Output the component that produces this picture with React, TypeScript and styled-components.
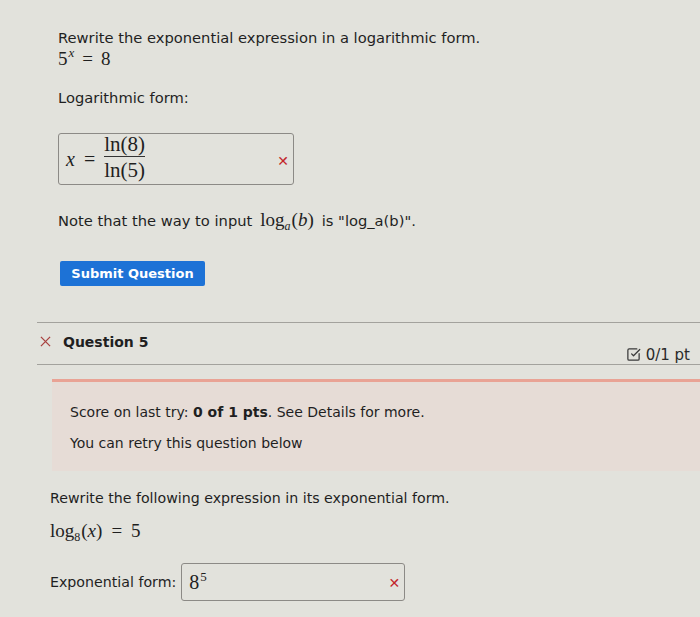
import * as React from 'react';
import styled, { createGlobalStyle } from 'styled-components';
import { SquareCheckBig } from 'lucide-react';

const GlobalStyle = createGlobalStyle`
  html, body {
    margin: 0;
    padding: 0;
    background: #e2e2dc;
  }
  body {
    font-family: 'DejaVu Sans', Verdana, sans-serif;
    color: #1f1f1f;
  }
`;

const Page = styled.div`
  width: 700px;
  height: 617px;
  overflow: hidden;
  padding-top: 28px;
  box-sizing: border-box;
`;

const Section = styled.div<{ left: number }>`
  padding-left: ${(p) => p.left}px;
  display: flex;
  flex-direction: column;
  align-items: flex-start;
`;

const Prompt = styled.div<{ size: number }>`
  font-size: ${(p) => p.size}px;
  line-height: 20px;
`;

const MathLine = styled.div<{ top: number }>`
  margin-top: ${(p) => p.top}px;
  font-family: 'Liberation Serif', 'DejaVu Serif', serif;
  font-size: 19px;
  line-height: 22px;
  color: #1f1f1f;
`;

const Sup = styled.sup<{ italic?: boolean }>`
  font-size: 13px;
  font-style: ${(p) => (p.italic ? 'italic' : 'normal')};
  vertical-align: 8px;
  line-height: 0;
  margin-left: 1px;
`;

const Sub = styled.sub`
  font-size: 12px;
  vertical-align: -4px;
  line-height: 0;
  margin-right: 1px;
`;

const Op = styled.span<{ gap?: number }>`
  margin: 0 ${(p) => p.gap ?? 8}px;
`;

const I = styled.i`
  font-style: italic;
`;

const Label = styled.div<{ top: number }>`
  margin-top: ${(p) => p.top}px;
  font-size: 14.7px;
  line-height: 20px;
`;

const AnswerBox = styled.div<{ w: number; h: number; top: number }>`
  margin-top: ${(p) => p.top}px;
  width: ${(p) => p.w}px;
  height: ${(p) => p.h}px;
  box-sizing: border-box;
  border: 1.5px solid #8c8a86;
  border-radius: 3px;
  display: flex;
  align-items: center;
  justify-content: space-between;
  padding: 0 4px 0 7px;
  font-family: 'Liberation Serif', 'DejaVu Serif', serif;
  color: #1f1f1f;
`;

const WrongMark = styled.span<{ drop: number }>`
  font-family: 'DejaVu Sans', sans-serif;
  font-weight: bold;
  font-size: 14px;
  color: #c3262b;
  margin-top: ${(p) => p.drop}px;
`;

const Fraction = styled.span`
  display: inline-flex;
  flex-direction: column;
  align-items: center;
  font-size: 21px;
  line-height: 22px;
  margin-top: -4px;
`;

const FracBar = styled.span`
  align-self: stretch;
  height: 1px;
  background: #333;
  margin: 1px 0 2px;
`;

const Expr = styled.span`
  display: flex;
  align-items: center;
  font-size: 20px;
`;

const Note = styled.div`
  margin-top: 24px;
  font-size: 14.7px;
  line-height: 22px;
  display: flex;
  align-items: baseline;
  gap: 8px;
`;

const InlineMath = styled.span`
  font-family: 'Liberation Serif', 'DejaVu Serif', serif;
  font-size: 19px;
`;

const SubmitButton = styled.button`
  margin-top: 29px;
  margin-left: 2px;
  background: #1d72d6;
  color: #fff;
  border: none;
  border-radius: 2px;
  height: 25px;
  width: 145px;
  font-family: 'DejaVu Sans', sans-serif;
  font-weight: bold;
  font-size: 13px;
  padding: 0;
`;

const Divider = styled.div<{ top: number; left: number }>`
  margin-top: ${(p) => p.top}px;
  margin-left: ${(p) => p.left}px;
  height: 1px;
  background: #a3a29d;
`;

const QuestionRow = styled.div`
  height: 41px;
  display: flex;
  align-items: center;
  justify-content: space-between;
  padding: 0 10px 0 40px;
`;

const QuestionTitle = styled.div`
  display: flex;
  align-items: center;
  gap: 12px;
  font-size: 14px;
  font-weight: bold;
  margin-top: -4px;
`;

const XIcon = styled.svg`
  width: 11px;
  height: 11px;
`;

const Points = styled.div`
  display: flex;
  align-items: center;
  gap: 5px;
  font-size: 15px;
  margin-top: 22px;
  color: #2a2a2a;
`;

const ScoreBox = styled.div`
  margin: 14px 0 0 52px;
  border-top: 3px solid #e9a395;
  background: #e6dcd6;
  padding: 20px 18px 16px 18px;
  height: 92px;
  box-sizing: border-box;
  display: flex;
  flex-direction: column;
  gap: 11px;
  font-size: 14px;
  line-height: 20px;
`;

const Section2 = styled(Section)`
  margin-top: 17px;
`;

const FormRow = styled.div`
  margin-top: 21px;
  display: flex;
  align-items: center;
  gap: 5px;
  font-size: 14.2px;
`;

export default function App() {
  return (
    <Page>
      <GlobalStyle />
      <Section left={58}>
        <Prompt size={14.7}>Rewrite the exponential expression in a logarithmic form.</Prompt>
        <MathLine top={0}>
          5<Sup italic>x</Sup>
          <Op>=</Op>8
        </MathLine>
        <Label top={18}>Logarithmic form:</Label>
        <AnswerBox w={236} h={52} top={25}>
          <Expr>
            <I>x</I>
            <Op gap={9}>=</Op>
            <Fraction>
              <span>ln(8)</span>
              <FracBar />
              <span>ln(5)</span>
            </Fraction>
          </Expr>
          <WrongMark drop={4}>✕</WrongMark>
        </AnswerBox>
        <Note>
          <span>Note that the way to input</span>
          <InlineMath>
            log<Sub><I>a</I></Sub>(<I>b</I>)
          </InlineMath>
          <span>is "log_a(b)".</span>
        </Note>
        <SubmitButton>Submit Question</SubmitButton>
      </Section>

      <Divider top={36} left={37} />
      <QuestionRow>
        <QuestionTitle>
          <XIcon viewBox="0 0 12 12">
            <path d="M1 1L11 11M11 1L1 11" stroke="#a8413f" strokeWidth="1.4" />
          </XIcon>
          Question 5
        </QuestionTitle>
        <Points>
          <SquareCheckBig size={15} strokeWidth={2} color="#3a3a3a" />
          0/1 pt
        </Points>
      </QuestionRow>
      <Divider top={0} left={37} />

      <ScoreBox>
        <div>
          Score on last try: <b>0 of 1 pts</b>. See Details for more.
        </div>
        <div>You can retry this question below</div>
      </ScoreBox>

      <Section2 left={50}>
        <Prompt size={14.2}>Rewrite the following expression in its exponential form.</Prompt>
        <MathLine top={12}>
          log<Sub>8</Sub>(<I>x</I>)<Op gap={9}>=</Op>5
        </MathLine>
        <FormRow>
          <span>Exponential form:</span>
          <AnswerBox w={224} h={38} top={0}>
            <Expr>
              <span>
                8<Sup>5</Sup>
              </span>
            </Expr>
            <WrongMark drop={2}>✕</WrongMark>
          </AnswerBox>
        </FormRow>
      </Section2>
    </Page>
  );
}
